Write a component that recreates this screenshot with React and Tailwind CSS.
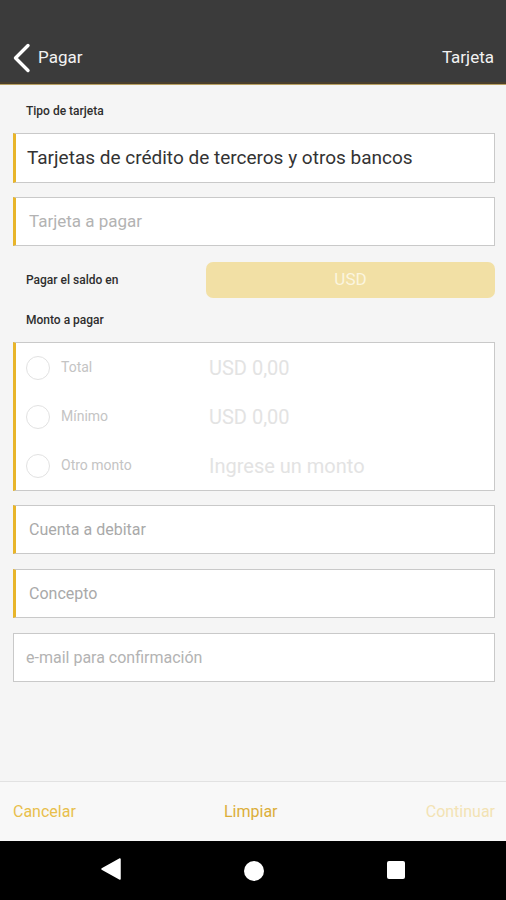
import React from "react";

function Field({ children, gold = true, className = "" }) {
  return (
    <div
      className={`flex items-center bg-white border border-[#c9c9c9] ${
        gold ? "border-l-[3px] border-l-[#e8b52a] pl-[13px]" : "pl-[12px]"
      } ${className}`}
    >
      {children}
    </div>
  );
}

function RadioRow({ label, value }) {
  return (
    <div className="flex h-[49px] items-center">
      <div className="ml-[10px] h-[24px] w-[24px] rounded-full border border-[#e2e2e2]" />
      <span className="ml-[11px] w-[148px] text-[14px] text-[#c4c4c4]">{label}</span>
      <span className="text-[20px] text-[#e3e3e3]">{value}</span>
    </div>
  );
}

export default function App() {
  return (
    <div
      className="flex h-[900px] w-[506px] flex-col bg-[#f5f5f5]"
      style={{ fontFamily: "Roboto, 'Noto Sans', sans-serif" }}
    >
      {/* header */}
      <div className="flex h-[85px] shrink-0 items-end justify-between bg-[#3b3b3b] border-b-[3px] border-b-[#4a3f2c] pl-[11px] pr-[12px] pb-[9px]">
        <div className="flex items-center">
          <svg width="22" height="30" viewBox="0 0 22 30" className="mr-[5px]">
            <path d="M17 2.5 L4.5 15 L17 27.5" fill="none" stroke="#ffffff" strokeWidth="3.4" strokeLinecap="round" strokeLinejoin="round" />
          </svg>
          <span className="text-[17px] text-[#f2f2f2]">Pagar</span>
        </div>
        <span className="mb-[3px] text-[17px] text-[#f2f2f2]">Tarjeta</span>
      </div>
      <div className="h-px bg-[#b8a062] -mt-px" />

      {/* body */}
      <div className="flex flex-1 flex-col pl-[13px] pr-[11px] pt-[17px] text-[#333]">
        <div className="pl-[13px] text-[12px] font-medium text-[#2e2e2e]">Tipo de tarjeta</div>
        <Field className="mt-[13px] h-[50px]">
          <span className="-ml-[2px] text-[19px] text-[#333333]">Tarjetas de crédito de terceros y otros bancos</span>
        </Field>
        <Field className="mt-[14px] h-[49px]">
          <span className="text-[17px] text-[#b3b3b3]">Tarjeta a pagar</span>
        </Field>
        <div className="mt-[16px] flex items-center">
          <span className="w-[193px] pl-[13px] text-[12px] font-medium text-[#2e2e2e]">Pagar el saldo en</span>
          <div className="flex h-[36px] flex-1 items-center justify-center rounded-[7px] bg-[#f2e0a5] text-[17px] text-[#fbf5df]">
            USD
          </div>
        </div>
        <div className="mt-[13px] pl-[13px] text-[12px] font-medium text-[#2e2e2e]">Monto a pagar</div>
        <div className="mt-[13px] flex h-[149px] flex-col justify-center bg-white border border-[#c9c9c9] border-l-[3px] border-l-[#e8b52a]">
          <RadioRow label="Total" value="USD 0,00" />
          <RadioRow label="Mínimo" value="USD 0,00" />
          <RadioRow label="Otro monto" value="Ingrese un monto" />
        </div>
        <Field className="mt-[14px] h-[49px]">
          <span className="text-[16px] text-[#a9a9a9]">Cuenta a debitar</span>
        </Field>
        <Field className="mt-[15px] h-[49px]">
          <span className="text-[16px] text-[#a9a9a9]">Concepto</span>
        </Field>
        <Field gold={false} className="mt-[15px] h-[49px]">
          <span className="text-[16px] text-[#b3b3b3]">e-mail para confirmación</span>
        </Field>
      </div>

      {/* footer */}
      <div className="flex h-[60px] shrink-0 items-center justify-between border-t border-t-[#e2e2e2] bg-[#f8f8f8] pl-[13px] pr-[11px] text-[16px]">
        <span className="text-[#e8bf4c]">Cancelar</span>
        <span className="text-[#dcae3a]">Limpiar</span>
        <span className="text-[#f3e3b4]">Continuar</span>
      </div>

      {/* nav bar */}
      <div className="relative flex h-[59px] shrink-0 items-center bg-black">
        <svg width="20" height="22" viewBox="0 0 20 22" className="absolute left-[101px] top-[17px]">
          <path d="M19 1 L19 21 L1 11 Z" fill="#ffffff" strokeLinejoin="round" stroke="#ffffff" strokeWidth="1.5" />
        </svg>
        <div className="absolute left-[244px] top-[20px] h-[20px] w-[20px] rounded-full bg-white" />
        <div className="absolute left-[387px] top-[20px] h-[18px] w-[18px] rounded-[2px] bg-white" />
      </div>
    </div>
  );
}
